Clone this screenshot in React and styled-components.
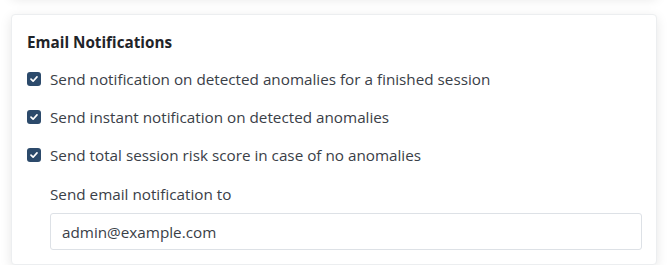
import styled, { createGlobalStyle } from 'styled-components';

const GlobalStyle = createGlobalStyle`
  html, body {
    margin: 0;
    padding: 0;
    background: #ffffff;
    font-family: "Open Sans", "Noto Sans", sans-serif;
    color: #333a40;
  }
`;

const Page = styled.div`
  display: flex;
  flex-direction: column;
  gap: 18px;
  padding: 0 13px 0 11px;
  margin-top: -16px;
`;

const Card = styled.section`
  background: #fff;
  border-radius: 4px;
  border: 1px solid #eceef0;
  box-shadow: 0 3px 12px rgba(0, 0, 0, 0.1);
  padding: ${props => props.$padding || '16px 14px 14px 15px'};
  min-height: ${props => props.$minHeight || 'auto'};
`;

const Title = styled.h3`
  margin: 0;
  font-size: 15.25px;
  font-weight: 700;
  line-height: 20px;
  color: #1f2429;
  padding-top: 1px;
`;

const List = styled.div`
  display: flex;
  flex-direction: column;
  gap: 18px;
  margin-top: 17px;
`;

const Row = styled.label`
  display: flex;
  align-items: center;
  gap: 9px;
  font-size: 15.25px;
  line-height: 20px;
  color: #3a4047;
`;

const Box = styled.span`
  width: 14px;
  height: 14px;
  border-radius: 3px;
  background: #2c4a6b;
  display: flex;
  align-items: center;
  justify-content: center;
  flex-shrink: 0;
`;

const EmailBlock = styled.div`
  padding-left: 23px;
  margin-top: 19px;
  display: flex;
  flex-direction: column;
  gap: 9px;
`;

const FieldLabel = styled.div`
  font-size: 15.25px;
  line-height: 20px;
  color: #3a4047;
`;

const Input = styled.input`
  box-sizing: border-box;
  width: 100%;
  height: 37px;
  border: 1px solid #dde1e6;
  border-radius: 3px;
  padding: 0 11px;
  font-family: "Open Sans", "Noto Sans", sans-serif;
  font-size: 15.25px;
  color: #3a4047;
  outline: none;
`;

const Check = () => (
  <Box>
    <svg width="10" height="10" viewBox="0 0 10 10">
      <path d="M2 5.2 L4.1 7.2 L8 2.9" fill="none" stroke="#fff" strokeWidth="1.7" strokeLinecap="round" strokeLinejoin="round" />
    </svg>
  </Box>
);

const options = [
  'Send notification on detected anomalies for a finished session',
  'Send instant notification on detected anomalies',
  'Send total session risk score in case of no anomalies',
];

export default function App() {
  return (
    <>
      <GlobalStyle />
      <Page>
        <Card $minHeight="10px" $padding="0" />
        <Card>
          <Title>Email Notifications</Title>
          <List>
            {options.map(text => (
              <Row key={text}>
                <Check />
                {text}
              </Row>
            ))}
          </List>
          <EmailBlock>
            <FieldLabel>Send email notification to</FieldLabel>
            <Input defaultValue="admin@example.com" />
          </EmailBlock>
        </Card>
      </Page>
    </>
  );
}
